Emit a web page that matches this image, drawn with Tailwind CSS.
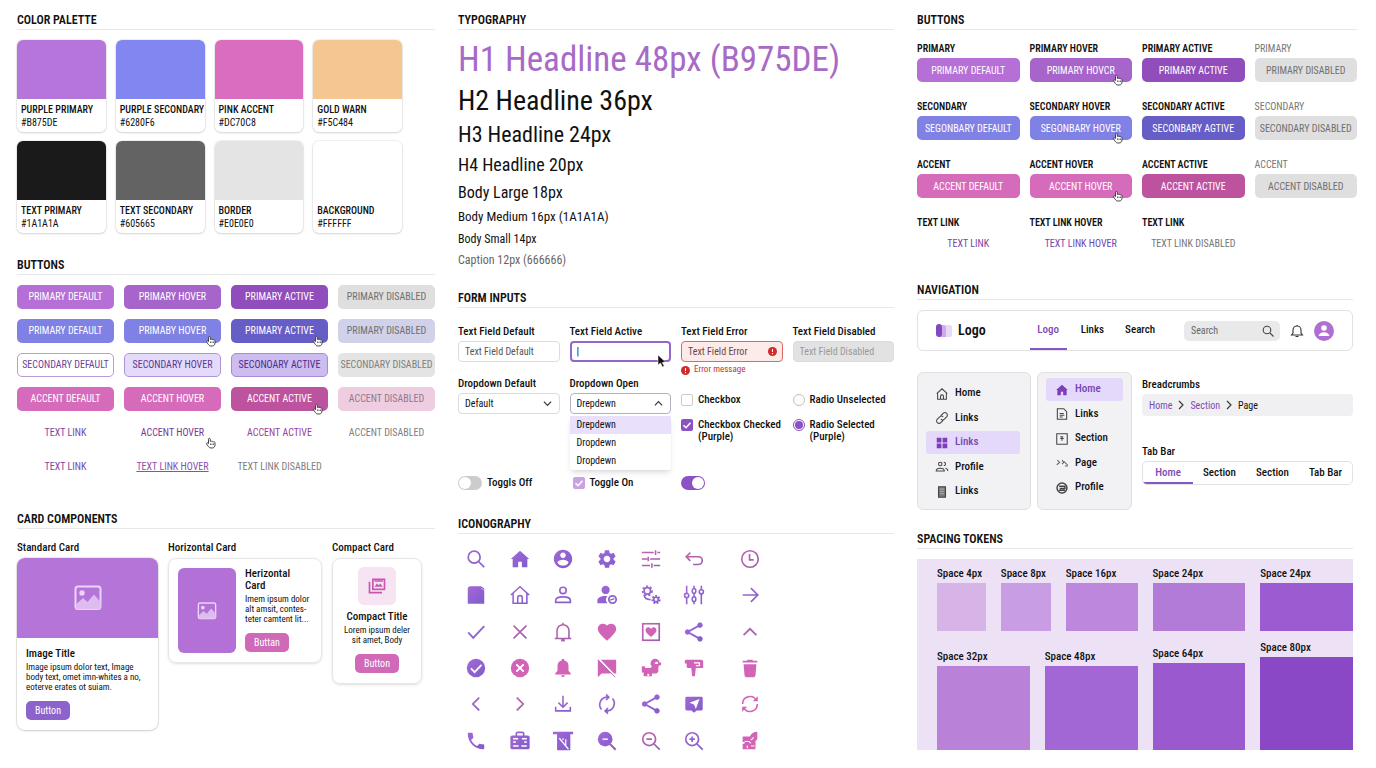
<!DOCTYPE html>
<html lang="en">
<head>
    <meta charset="UTF-8">
    <meta name="viewport" content="width=device-width, initial-scale=1.0">
    <title>Design System</title>
    <script src="https://cdn.jsdelivr.net/npm/@tailwindcss/browser@4"></script>
</head>
<body class="bg-white text-[#111111] font-['Roboto_Condensed',Roboto,'Liberation_Sans',sans-serif]">

    <!-- Shared gradients and symbols -->
    <svg class="absolute size-0" aria-hidden="true">
        <defs>
            <linearGradient id="violet" gradientUnits="userSpaceOnUse" x1="2" y1="2" x2="22" y2="22"><stop offset="0" stop-color="#a468d6"/><stop offset="1" stop-color="#7f5ccb"/></linearGradient>
            <linearGradient id="mix" gradientUnits="userSpaceOnUse" x1="2" y1="2" x2="22" y2="22"><stop offset="0" stop-color="#cb62ae"/><stop offset="1" stop-color="#935fb0"/></linearGradient>
            <linearGradient id="pink" gradientUnits="userSpaceOnUse" x1="2" y1="2" x2="22" y2="22"><stop offset="0" stop-color="#cf62bd"/><stop offset="1" stop-color="#d465b0"/></linearGradient>
        </defs>
        <symbol id="hand" viewBox="0 0 24 24">
            <path d="M7 13V4.500a1.800 1.800 0 0 1 3.600 0V9c.6-1 2.700-1 3.200.3.800-.9 2.700-.6 3.100.6 1.100-.6 3.100-.1 3.100 1.800V16c0 3.500-2 6-6 6h-2c-2.500 0-4-1-5.200-3L3 13.800c-.8-1.400 1-2.900 2.300-1.700z" fill="#fff" stroke="#333" stroke-width="1.800" stroke-linejoin="round"/>
            <path d="M11 13v3M14 13v3M17 13v3" stroke="#333" stroke-width="1.500"/>
        </symbol>
        <symbol id="image" viewBox="0 0 28 26">
            <rect x="1.500" y="1.500" width="25" height="22.500" rx="2.500" fill="none" stroke="#ecd3f7" stroke-width="2"/>
            <circle cx="8" cy="8" r="2.700" fill="#ecd3f7"/>
            <path d="M2 19.500 9 13l4.500 4L20 9.500l6.500 7.500v5.500a1.500 1.500 0 0 1-1.500 1.500H3.500A1.500 1.500 0 0 1 2 22.500z" fill="#dfbcf0"/>
        </symbol>
        <symbol id="house" viewBox="0 0 24 24"><path d="M10 21v-6h4v6h6v-9h2L12 3 2 12h2v9z"/></symbol>
        <symbol id="share" viewBox="0 0 24 24">
            <path d="M18.500 4.500 5 12l13.500 7.500" fill="none" stroke-width="2"/>
            <circle cx="18.500" cy="4.500" r="2.500"/><circle cx="5" cy="12" r="2.500"/><circle cx="18.500" cy="19.500" r="2.500"/>
        </symbol>
        <symbol id="check" viewBox="0 0 12 12"><path d="M2.500 6.200 5 8.700l4.500-5" fill="none" stroke="#fff" stroke-width="1.600"/></symbol>
        <symbol id="alert" viewBox="0 0 12 12"><circle cx="6" cy="6" r="6" fill="#cf2b2b"/><path d="M6 2.500v4M6 8v1.500" stroke="#fff" stroke-width="1.400"/></symbol>
    </svg>

    <main class="grid grid-cols-[418fr_436fr_436fr] gap-[23px] pt-[11px] pl-[17px] pr-[23px]">

        <!-- Left column -->
        <div>
            <section>
                <h2 class="text-[12px] leading-[18px] font-semibold border-b border-[#e8e8ea]">COLOR PALETTE</h2>
                <div class="mt-[10px] mr-[33px] grid grid-cols-4 gap-x-[10px] gap-y-[9px] text-[10px] leading-[13px]">
                    <div class="h-[92px] rounded-md overflow-hidden ring-1 ring-black/5 shadow-sm">
                        <div class="h-[59px] bg-[#b675da]"></div>
                        <div class="px-1 pt-1"><p class="font-medium whitespace-nowrap">PURPLE PRIMARY</p><p>#B875DE</p></div>
                    </div>
                    <div class="h-[92px] rounded-md overflow-hidden ring-1 ring-black/5 shadow-sm">
                        <div class="h-[59px] bg-[#8286f0]"></div>
                        <div class="px-1 pt-1"><p class="font-medium whitespace-nowrap">PURPLE SECONDARY</p><p>#6280F6</p></div>
                    </div>
                    <div class="h-[92px] rounded-md overflow-hidden ring-1 ring-black/5 shadow-sm">
                        <div class="h-[59px] bg-[#da6dc0]"></div>
                        <div class="px-1 pt-1"><p class="font-medium whitespace-nowrap">PINK ACCENT</p><p>#DC70C8</p></div>
                    </div>
                    <div class="h-[92px] rounded-md overflow-hidden ring-1 ring-black/5 shadow-sm">
                        <div class="h-[59px] bg-[#f5c692]"></div>
                        <div class="px-1 pt-1"><p class="font-medium whitespace-nowrap">GOLD WARN</p><p>#F5C484</p></div>
                    </div>
                    <div class="h-[92px] rounded-md overflow-hidden ring-1 ring-black/5 shadow-sm">
                        <div class="h-[59px] bg-[#1a1a1a]"></div>
                        <div class="px-1 pt-1"><p class="font-medium whitespace-nowrap">TEXT PRIMARY</p><p>#1A1A1A</p></div>
                    </div>
                    <div class="h-[92px] rounded-md overflow-hidden ring-1 ring-black/5 shadow-sm">
                        <div class="h-[59px] bg-[#636363]"></div>
                        <div class="px-1 pt-1"><p class="font-medium whitespace-nowrap">TEXT SECONDARY</p><p>#605665</p></div>
                    </div>
                    <div class="h-[92px] rounded-md overflow-hidden ring-1 ring-black/5 shadow-sm">
                        <div class="h-[59px] bg-[#e4e4e4]"></div>
                        <div class="px-1 pt-1"><p class="font-medium whitespace-nowrap">BORDER</p><p>#E0E0E0</p></div>
                    </div>
                    <div class="h-[92px] rounded-md overflow-hidden ring-1 ring-black/5 shadow-sm">
                        <div class="h-[59px]"></div>
                        <div class="px-1 pt-1"><p class="font-medium whitespace-nowrap">BACKGROUND</p><p>#FFFFFF</p></div>
                    </div>
                </div>
            </section>

            <section class="mt-[23px]">
                <h2 class="text-[12px] leading-[18px] font-semibold border-b border-[#e8e8ea]">BUTTONS</h2>
                <div class="mt-[10px] grid grid-cols-4 gap-[10px] text-[10px] leading-[24px] text-center whitespace-nowrap">
                    <button class="h-6 rounded-[5px] bg-[#b56fd6] text-white">PRIMARY DEFAULT</button>
                    <button class="h-6 rounded-[5px] bg-[#a765cb] text-white">PRIMARY HOVER</button>
                    <button class="h-6 rounded-[5px] bg-[#924dbc] text-white">PRIMARY ACTIVE</button>
                    <button disabled class="h-6 rounded-[5px] bg-[#dfdfdf] text-[#707070]">PRIMARY DISABLED</button>

                    <button class="h-6 rounded-[5px] bg-[#8081e5] text-white">PRIMARY DEFAULT</button>
                    <button class="relative h-6 rounded-[5px] bg-[#8081e5] text-white">PRIMABY HOVER
                        <svg class="absolute right-1 -bottom-1 size-3"><use href="#hand"/></svg>
                    </button>
                    <button class="relative h-6 rounded-[5px] bg-[#675dc6] text-white">PRIMARY ACTIVE
                        <svg class="absolute right-1 -bottom-1 size-3"><use href="#hand"/></svg>
                    </button>
                    <button disabled class="h-6 rounded-[5px] bg-[#d1d2ea] text-[#707070]">PRIMARY DISABLED</button>

                    <button class="h-6 rounded-[5px] border border-[#ba9bd9] leading-[22px] text-[#6b3fa0]">SECONDARY DEFAULT</button>
                    <button class="h-6 rounded-[5px] border border-[#ad94dc] bg-[#e4dbfa] leading-[22px] text-[#5b3795]">SECONDARY HOVER</button>
                    <button class="h-6 rounded-[5px] border border-[#a78bd9] bg-[#cdbcf0] leading-[22px] text-[#4b2d8b]">SECONOARY ACTIVE</button>
                    <button disabled class="h-6 rounded-[5px] bg-[#e4e4e4] text-[#808080]">SECONDARY DISABLED</button>

                    <button class="h-6 rounded-[5px] bg-[#d66bbc] text-white">ACCENT DEFAULT</button>
                    <button class="h-6 rounded-[5px] bg-[#d66bbc] text-white">ACCENT HOVER</button>
                    <button class="relative h-6 rounded-[5px] bg-[#bd539f] text-white">ACCENT ACTIVE
                        <svg class="absolute right-1 -bottom-1 size-3"><use href="#hand"/></svg>
                    </button>
                    <button disabled class="h-6 rounded-[5px] bg-[#eecde1] text-[#92798a]">ACCENT DISABLED</button>

                    <a href="#" class="text-[#7a45a5]">TEXT LINK</a>
                    <a href="#" class="relative text-[#7a359a]">ACCENT HOVER
                        <svg class="absolute right-1 -bottom-1 size-3"><use href="#hand"/></svg>
                    </a>
                    <a href="#" class="text-[#9b3c98]">ACCENT ACTIVE</a>
                    <span class="text-[#808080]">ACCENT DISABLED</span>

                    <a href="#" class="text-[#7a45a5]">TEXT LINK</a>
                    <a href="#" class="text-[#8c4fb0] underline">TEXT LINK HOVER</a>
                    <span class="text-[#808080]">TEXT LINK DISABLED</span>
                </div>
            </section>

            <section class="mt-[31px]">
                <h2 class="text-[12px] leading-[18px] font-semibold border-b border-[#e8e8ea]">CARD COMPONENTS</h2>
                <div class="mt-[10px] mr-[13px] grid grid-cols-[141fr_154fr_90fr] gap-[10px] items-start">
                    <div>
                        <h3 class="text-[11px] leading-[18px] font-medium">Standard Card</h3>
                        <article class="mt-px rounded-lg overflow-hidden ring-1 ring-black/8 shadow-sm">
                            <div class="h-20 bg-[#b575d8] flex items-center justify-center">
                                <svg class="w-7 h-[26px]"><use href="#image"/></svg>
                            </div>
                            <div class="px-[9px] pt-2 pb-[9px]">
                                <h4 class="text-[11px] leading-4 font-medium">Image Title</h4>
                                <p class="text-[9px] leading-[10px] whitespace-nowrap">Image ipsum dolor text, Image<br>body text, omet imn-whites a no,<br>eoterve erates ot suiam.</p>
                                <button class="mt-[9px] h-[19px] w-11 rounded-[5px] bg-[#8c62cd] text-white text-[10px]">Button</button>
                            </div>
                        </article>
                    </div>
                    <div>
                        <h3 class="text-[11px] leading-[18px] font-medium">Horizontal Card</h3>
                        <article class="mt-px flex gap-[9px] p-[9px] rounded-lg border border-[#e6e6e6] shadow-sm">
                            <div class="w-[58px] rounded-md bg-[#b371d8] flex items-center justify-center">
                                <svg class="w-5 h-[18px]"><use href="#image"/></svg>
                            </div>
                            <div>
                                <h4 class="text-[11px] leading-3 font-medium">Herizontal<br>Card</h4>
                                <p class="text-[9px] leading-[10px] whitespace-nowrap mt-[2px]">Imem ipsum dolor<br>alt amsit, contes-<br>teter camtent lit...</p>
                                <button class="mt-[9px] h-[19px] w-11 rounded-[5px] bg-[#cf69b8] text-white text-[10px]">Buttan</button>
                            </div>
                        </article>
                    </div>
                    <div>
                        <h3 class="text-[11px] leading-[18px] font-medium">Compact Card</h3>
                        <article class="mt-px pt-2 pb-[10px] flex flex-col items-center text-center rounded-lg border border-[#e6e6e6] shadow-sm">
                            <div class="size-[38px] rounded-md bg-[#f6e4f2] flex items-center justify-center">
                                <svg class="size-5" viewBox="0 0 24 24" fill="none" stroke="#ca55b0" stroke-width="2"><rect x="7" y="4" width="14" height="12"/><path d="M3 7v13h15M9 6h10"/><path d="m9 13 3-4 2 2 2-2 3 4z" fill="#ca55b0" stroke="none"/></svg>
                            </div>
                            <h4 class="mt-1 text-[11px] leading-4 font-medium">Compact Title</h4>
                            <p class="text-[9px] leading-[10px] whitespace-nowrap">Lorem ipsum deler<br>sit amet, Body</p>
                            <button class="mt-[9px] h-[19px] w-11 rounded-[5px] bg-[#cf69b8] text-white text-[10px]">Button</button>
                        </article>
                    </div>
                </div>
            </section>
        </div>

        <!-- Middle column -->
        <div>
            <section class="whitespace-nowrap">
                <h2 class="text-[12px] leading-[18px] font-semibold border-b border-[#e8e8ea]">TYPOGRAPHY</h2>
                <p class="mt-[10px] text-[35px] leading-10 text-[#a76bc6]">H1 Headline 48px (B975DE)</p>
                <p class="mt-[5px] text-[28px] leading-8">H2 Headline 36px</p>
                <p class="mt-[6px] text-[22px] leading-6">H3 Headline 24px</p>
                <p class="mt-[6px] text-[18px] leading-6">H4 Headline 20px</p>
                <p class="mt-[6px] text-[16px] leading-5">Body Large 18px</p>
                <p class="mt-[6px] text-[13px] leading-4">Body Medium 16px (1A1A1A)</p>
                <p class="mt-[6px] text-[12px] leading-4">Body Small 14px</p>
                <p class="mt-[5px] text-[12px] leading-4 text-[#666666]">Caption 12px (666666)</p>
            </section>

            <section class="mt-[21px]">
                <h2 class="text-[12px] leading-[18px] font-semibold border-b border-[#e8e8ea]">FORM INPUTS</h2>
                <form class="mt-[15px] grid grid-cols-4 gap-[10px] text-[11px] font-medium whitespace-nowrap">
                    <div>
                        <label for="field-default" class="block leading-[18px]">Text Field Default</label>
                        <input id="field-default" type="text" value="Text Field Default" class="block w-full h-[21px] px-[6px] rounded border border-[#dcdcdc] text-[10px] font-normal text-[#555555]">
                        <label for="dropdown-default" class="block mt-[13px] leading-[18px]">Dropdown Default</label>
                        <div class="relative">
                            <select id="dropdown-default" class="appearance-none block w-full h-[21px] px-[6px] rounded border border-[#dcdcdc] text-[10px] font-normal"><option>Default</option></select>
                            <svg class="absolute right-2 top-[6px] size-[9px]" viewBox="0 0 10 10" fill="none" stroke="#333" stroke-width="1.300"><path d="m1 3 4 4 4-4"/></svg>
                        </div>
                        <label class="mt-[62px] h-[14px] flex items-center gap-[5px]">
                            <input type="checkbox" role="switch" class="appearance-none w-6 h-[14px] p-px rounded-full bg-[#cccccc] before:block before:size-3 before:rounded-full before:bg-white">
                            Toggls Off
                        </label>
                    </div>
                    <div>
                        <label for="field-active" class="block leading-[18px]">Text Field Active</label>
                        <div class="relative">
                            <input id="field-active" type="text" value="|" class="block w-full h-[21px] px-[5px] rounded border-2 border-[#9466cc] text-[11px] font-normal outline-none">
                            <svg class="absolute right-[5px] top-[14px] w-[9px] h-3" viewBox="0 0 9 12"><path d="M1 0v10l2.500-2 2 4 1.700-1-2-3.500L8.500 7z" fill="#111" stroke="#fff" stroke-width=".5"/></svg>
                        </div>
                        <label for="dropdown-open" class="block mt-[13px] leading-[18px]">Dropdown Open</label>
                        <div class="relative">
                            <select id="dropdown-open" class="appearance-none block w-full h-[21px] px-[6px] rounded border border-[#b5b0c0] text-[10px] font-normal"><option>Drepdewn</option></select>
                            <svg class="absolute right-2 top-[6px] size-[9px]" viewBox="0 0 10 10" fill="none" stroke="#333" stroke-width="1.300"><path d="m1 7 4-4 4 4"/></svg>
                        </div>
                        <ul class="mt-[2px] rounded-[3px] shadow-md text-[10px] font-normal leading-[18px]">
                            <li class="px-[7px] bg-[#e9e0fb]">Drepdewn</li>
                            <li class="px-[7px]">Dropdewn</li>
                            <li class="px-[7px]">Dropdewn</li>
                        </ul>
                        <label class="relative mt-[6px] ml-[3px] h-[14px] flex items-center gap-[5px]">
                            <input type="checkbox" checked class="appearance-none size-3 rounded-xs bg-[#c9a2e6]">
                            <svg class="absolute left-0 top-px size-3"><use href="#check"/></svg>
                            Toggle On
                        </label>
                    </div>
                    <div>
                        <label for="field-error" class="block leading-[18px]">Text Field Error</label>
                        <div class="relative">
                            <input id="field-error" type="text" value="Text Field Error" class="block w-full h-[21px] px-[6px] rounded border border-[#dc6a62] bg-[#fdebe9] text-[10px] font-normal text-[#6b4848]">
                            <svg class="absolute right-[6px] top-[6px] size-[9px]"><use href="#alert"/></svg>
                        </div>
                        <p class="mt-[2px] h-3 flex items-center gap-1 text-[9px] font-normal text-[#c43434]">
                            <svg class="size-[9px]"><use href="#alert"/></svg>Error message
                        </p>
                        <label class="mt-4 h-4 flex items-center gap-[5px]">
                            <input type="checkbox" class="appearance-none size-3 rounded-xs border border-[#cccccc]">
                            Checkbox
                        </label>
                        <label class="relative mt-[11px] flex items-start gap-[5px] leading-3">
                            <input type="checkbox" checked class="appearance-none size-3 rounded-xs bg-[#8b51c5]">
                            <svg class="absolute left-0 top-0 size-3"><use href="#check"/></svg>
                            <span>Checkbox Checked<br>(Purple)</span>
                        </label>
                        <input type="checkbox" role="switch" aria-label="Toggle" checked class="mt-[33px] appearance-none block w-6 h-[14px] p-px rounded-full bg-[#8b51c5] before:block before:ml-auto before:size-3 before:rounded-full before:bg-white">
                    </div>
                    <div>
                        <label for="field-disabled" class="block leading-[18px]">Text Field Disabled</label>
                        <input id="field-disabled" type="text" disabled value="Text Field Disabled" class="block w-full h-[21px] px-[6px] rounded border border-[#dcdcdc] bg-[#e2e2e2] text-[10px] font-normal text-[#999999]">
                        <label class="mt-[30px] h-4 flex items-center gap-[5px]">
                            <input type="radio" name="radio" class="appearance-none size-3 rounded-full border border-[#c0c0c0]">
                            Radio Unselected
                        </label>
                        <label class="mt-[11px] flex items-start gap-[5px] leading-3">
                            <input type="radio" name="radio" checked class="appearance-none size-3 p-px rounded-full border border-[#8b51c5] before:block before:size-2 before:rounded-full before:bg-[#8b51c5]">
                            <span>Radio Selected<br>(Purple)</span>
                        </label>
                    </div>
                </form>
            </section>

            <section class="mt-[25px]">
                <h2 class="text-[12px] leading-[18px] font-semibold border-b border-[#e8e8ea]">ICONOGRAPHY</h2>
                <div class="mt-[7px] -ml-1 w-[329px] h-[218px] grid grid-cols-[repeat(6,17fr)_26fr] grid-rows-6 place-items-center [&_svg]:size-[22px]">
                    <!-- Row 1 -->
                    <svg viewBox="0 0 24 24" fill="none" stroke="url(#violet)" stroke-width="1.900"><circle cx="10" cy="10" r="6.500"/><path d="m15 15 6 6"/></svg>
                    <svg viewBox="0 0 24 24" fill="url(#violet)"><use href="#house"/></svg>
                    <svg viewBox="0 0 24 24" fill="url(#violet)"><path d="M12 2C6.480 2 2 6.480 2 12s4.480 10 10 10 10-4.480 10-10S17.520 2 12 2zm0 3c1.660 0 3 1.340 3 3s-1.340 3-3 3-3-1.340-3-3 1.340-3 3-3zm0 14.200c-2.500 0-4.710-1.280-6-3.220.03-1.990 4-3.080 6-3.080 1.990 0 5.970 1.090 6 3.080-1.290 1.940-3.500 3.220-6 3.220z"/></svg>
                    <svg viewBox="0 0 24 24" fill="url(#violet)"><path d="M19.140 12.940c.04-.3.060-.61.060-.94 0-.32-.02-.64-.07-.94l2.030-1.580c.18-.14.230-.41.120-.61l-1.920-3.320c-.12-.22-.37-.29-.59-.22l-2.390.960c-.5-.38-1.030-.7-1.620-.94l-.36-2.540c-.04-.24-.24-.41-.48-.41h-3.840c-.24 0-.43.170-.47.410l-.36 2.540c-.59.240-1.130.570-1.620.940l-2.390-.96c-.22-.08-.47 0-.59.220L2.740 8.870c-.12.210-.08.470.120.610l2.030 1.580c-.05.3-.09.630-.09.940s.02.640.070.940l-2.030 1.580c-.18.140-.23.410-.12.610l1.920 3.320c.12.220.37.290.59.220l2.390-.96c.5.380 1.030.7 1.620.940l.36 2.540c.05.240.24.410.48.410h3.840c.24 0 .44-.17.470-.41l.36-2.540c.59-.24 1.130-.56 1.620-.94l2.390.960c.22.080.47 0 .59-.22l1.920-3.320c.12-.22.070-.47-.12-.61l-2.010-1.580zM12 15.600c-1.980 0-3.600-1.620-3.600-3.600s1.620-3.600 3.600-3.600 3.600 1.620 3.600 3.600-1.620 3.600-3.600 3.600z"/></svg>
                    <svg viewBox="0 0 24 24" fill="none" stroke="url(#mix)" stroke-width="1.700"><path d="M2 5h13m4 0h3M17 2.500v5M2 12h4m5 0h11M9 9.500v5M6 12h2M2 19h9m4 0h7M13 16.500v5"/></svg>
                    <svg viewBox="0 0 24 24" fill="none" stroke="url(#mix)" stroke-width="1.800"><path d="M8 5 3.500 9.500 8 14M3.500 9.500H17a4 4 0 0 1 4 4v0a4.500 4.500 0 0 1-4.500 4.500H11"/></svg>
                    <svg viewBox="0 0 24 24" fill="none" stroke="url(#mix)" stroke-width="1.800"><circle cx="12" cy="12" r="9"/><path d="M11.500 6.500V13H16"/></svg>
                    <!-- Row 2 -->
                    <svg viewBox="0 0 24 24" fill="url(#violet)"><path d="M6 2.500h11.500L21 5v16.500H3V5.500a3 3 0 0 1 3-3z"/><path d="M17.500 4.500 21 7" fill="none" stroke="#fff" stroke-opacity=".5"/></svg>
                    <svg viewBox="0 0 24 24" fill="none" stroke="url(#violet)" stroke-width="1.700"><path d="M2 12 12 3l10 9M4.500 10v11h15V10M9.500 21v-6a2.500 2.500 0 0 1 5 0v6"/></svg>
                    <svg viewBox="0 0 24 24" fill="none" stroke="url(#violet)" stroke-width="1.800"><circle cx="12" cy="7" r="3.500"/><path d="M4 20v-2c0-2.500 3-4 8-4s8 1.500 8 4v2z"/></svg>
                    <svg viewBox="0 0 24 24" fill="url(#violet)"><circle cx="10.500" cy="6.500" r="4.500"/><path d="M1.500 21v-3c0-3 3.500-5 9-5h2a6 6 0 0 0 0 8z"/><circle cx="18" cy="17" r="4" fill="none" stroke="url(#violet)" stroke-width="1.900"/><path d="M15.500 17.500 20 16" stroke="url(#violet)" stroke-width="1.500"/></svg>
                    <svg viewBox="0 0 24 24" fill="none" stroke="url(#violet)"><circle cx="8" cy="7.500" r="3.500" stroke-width="1.800"/><circle cx="8" cy="7.500" r="5" stroke-width="2" stroke-dasharray="2.300 2"/><circle cx="17.500" cy="17" r="2.500" stroke-width="1.800"/><circle cx="17.500" cy="17" r="4" stroke-width="2" stroke-dasharray="2 1.500"/><path d="M4.500 11.500c0 4 3 5.500 7 5.500" stroke-width="1.800"/></svg>
                    <svg viewBox="0 0 24 24" fill="none" stroke="url(#violet)" stroke-width="1.700"><path d="M4 2v8m0 5v7M12 2v3m0 5v4m0 5v3M20 2v4m0 5v11"/><circle cx="4" cy="12.500" r="2.300"/><ellipse cx="12" cy="7.500" rx="2" ry="2.500"/><ellipse cx="12" cy="16.500" rx="2" ry="2.500"/><circle cx="20" cy="8.500" r="2.300"/></svg>
                    <svg viewBox="0 0 24 24" fill="none" stroke="url(#violet)" stroke-width="1.800"><path d="M4 12h16M13 4.500l7.500 7.500-7.500 7.500"/></svg>
                    <!-- Row 3 -->
                    <svg viewBox="0 0 24 24" fill="none" stroke="url(#violet)" stroke-width="2"><path d="m3.500 12.500 5.500 6L21 5.500"/></svg>
                    <svg viewBox="0 0 24 24" fill="none" stroke="url(#mix)" stroke-width="1.800"><path d="m5 5 14 14M19 5 5 19"/></svg>
                    <svg viewBox="0 0 24 24" fill="none" stroke="url(#mix)" stroke-width="1.700"><path d="M3 19h18M5.500 19v-8.500a6.500 6.500 0 0 1 13 0V19M12 4V2"/><path d="M10 21h4" stroke-width="2.500"/></svg>
                    <svg viewBox="0 0 24 24" fill="url(#pink)"><path d="m12 21.500-1.500-1.300C5.400 15.400 2 12.300 2 8.500 2 5.400 4.400 3 7.500 3c1.700 0 3.400.8 4.500 2.100C13.100 3.800 14.800 3 16.500 3 19.600 3 22 5.400 22 8.500c0 3.800-3.400 6.900-8.500 11.700z"/></svg>
                    <svg viewBox="0 0 24 24" fill="url(#pink)"><rect x="3" y="3" width="18" height="18" fill="none" stroke="url(#mix)" stroke-width="1.800"/><path d="m12 17.500-1-.9C8 13.900 6 12.200 6 10a3.100 3.100 0 0 1 6-1.200A3.100 3.100 0 0 1 18 10c0 2.200-2 3.900-5 6.600z"/></svg>
                    <svg viewBox="0 0 24 24" fill="url(#violet)" stroke="url(#violet)"><use href="#share"/></svg>
                    <svg viewBox="0 0 24 24" fill="none" stroke="url(#mix)" stroke-width="1.900"><path d="m5 15.500 7-7 7 7"/></svg>
                    <!-- Row 4 -->
                    <svg viewBox="0 0 24 24"><circle cx="12" cy="12" r="10" fill="url(#violet)"/><path d="m6.500 12.500 4 4L18 8.500" fill="none" stroke="#fff" stroke-width="2"/></svg>
                    <svg viewBox="0 0 24 24"><circle cx="12" cy="12" r="10" fill="url(#pink)"/><path d="m8 8 8 8M16 8l-8 8" fill="none" stroke="#fff" stroke-width="2"/></svg>
                    <svg viewBox="0 0 24 24" fill="url(#pink)"><path d="M12 2a1.500 1.500 0 0 1 1.500 1.700A6 6 0 0 1 18 9.500V15l2.500 3v1h-17v-1L6 15V9.500a6 6 0 0 1 4.500-5.800A1.500 1.500 0 0 1 12 2zM10 20h4a2 2 0 0 1-4 0z"/></svg>
                    <svg viewBox="0 0 24 24"><path d="M2 3h20v15H6l-4 4z" fill="url(#pink)"/><path d="M3 2 21 21" stroke="#fff" stroke-width="2"/><path d="m2 3 19 19" stroke="#b35fae" stroke-width="1"/></svg>
                    <svg viewBox="0 0 24 24" fill="url(#pink)"><circle cx="16.500" cy="7" r="5"/><path d="M2 10h3l1 2h5l3-2h6v6l-2 2h-5v3H4v-4H2z"/><circle cx="9" cy="18.500" r="2.500"/><path d="M16 7.500h4a2 2 0 0 0-3-2z" fill="#fff"/><circle cx="9" cy="19.500" r="1.200" fill="#fff"/><path d="M20 6h3v3h-3z"/></svg>
                    <svg viewBox="0 0 24 24" fill="url(#pink)"><path d="M3 3h17a2 2 0 0 1 2 2v7h-8l-1 9h-3l-1-9H5a2 2 0 0 1-1-2V7H2V4z"/><path d="M12 6.500h6v3h-4" fill="none" stroke="#fff" stroke-width="1.300"/></svg>
                    <svg viewBox="0 0 24 24" fill="url(#pink)"><path d="M5 8h14l-1 12a2 2 0 0 1-2 2H8a2 2 0 0 1-2-2zM4 4h5V3h6v1h5v2H4z"/></svg>
                    <!-- Row 5 -->
                    <svg viewBox="0 0 24 24" fill="none" stroke="url(#violet)" stroke-width="1.900"><path d="m15.500 5-7 7 7 7"/></svg>
                    <svg viewBox="0 0 24 24" fill="none" stroke="url(#mix)" stroke-width="1.900"><path d="m8.500 5 7 7-7 7"/></svg>
                    <svg viewBox="0 0 24 24" fill="none" stroke="url(#violet)" stroke-width="1.700"><path d="M12 3v12M7 10.500l5 5 5-5M4 15v4.500h16V15"/></svg>
                    <svg viewBox="0 0 24 24" fill="none" stroke="url(#violet)" stroke-width="1.800"><path d="M6 18a8.300 8.300 0 0 1 5-13.500h2.500M11 1.500l3 3-3 3M18 6a8.300 8.300 0 0 1-5 13.500h-2.500M13 16.500l-3 3 3 3"/></svg>
                    <svg viewBox="0 0 24 24" fill="url(#violet)" stroke="url(#violet)"><use href="#share"/></svg>
                    <svg viewBox="0 0 24 24"><path d="M4 4h16a1.500 1.500 0 0 1 1.500 1.500v12A1.500 1.500 0 0 1 20 19h-5l-3 2.500L9 19H4a1.500 1.500 0 0 1-1.500-1.500v-12A1.500 1.500 0 0 1 4 4z" fill="url(#violet)"/><path d="m7 10.500 11-4-4 11-2-5z" fill="#fff"/></svg>
                    <svg viewBox="0 0 24 24" fill="none" stroke="url(#pink)" stroke-width="1.700"><path d="M4 12a8 8 0 0 1 15-4M20 12a8 8 0 0 1-15 4"/><path d="M20.500 3.500V9H15zM3.500 20.500V15H9z" fill="url(#pink)" stroke="none"/></svg>
                    <!-- Row 6 -->
                    <svg viewBox="0 0 24 24" fill="url(#violet)"><path d="M6.600 10.800c1.400 2.800 3.800 5.100 6.600 6.600l2.200-2.200c.3-.3.700-.4 1-.2 1.100.4 2.300.6 3.600.6.600 0 1 .4 1 1V20c0 .6-.4 1-1 1C10.600 21 3 13.400 3 4c0-.6.4-1 1-1h3.500c.6 0 1 .4 1 1 0 1.300.2 2.500.6 3.600.1.400 0 .8-.2 1z"/></svg>
                    <svg viewBox="0 0 24 24" fill="url(#violet)"><path d="M8 6.500V4a1.500 1.500 0 0 1 1.500-1.500h5A1.500 1.500 0 0 1 16 4v2.500" fill="none" stroke="url(#violet)" stroke-width="1.900"/><rect x="1.500" y="6" width="21" height="15" rx="2"/><path d="M4.500 9.500H10m4 0h5.500M4.500 13h3m9 0h3M4.500 17.500h6m3 0h6" stroke="#fff" stroke-width="1.700"/></svg>
                    <svg viewBox="0 0 24 24" fill="url(#violet)"><path d="M1 2h22v2.500h-3V22H5.500V4.500H1z"/><path d="m8 9 10 12M12 11V9M15 10v7" stroke="#fff" stroke-width="1.300"/></svg>
                    <svg viewBox="0 0 24 24"><circle cx="10" cy="10" r="8" fill="url(#violet)"/><path d="m15.500 15.500 6 6" stroke="url(#mix)" stroke-width="2.300"/><path d="M7 10h6" stroke="#fff" stroke-width="1.500"/></svg>
                    <svg viewBox="0 0 24 24" fill="none" stroke="url(#mix)" stroke-width="1.900"><circle cx="10" cy="10" r="7"/><path d="m15 15 6.500 6.500M7 10h6"/></svg>
                    <svg viewBox="0 0 24 24" fill="none" stroke="url(#violet)" stroke-width="1.900"><circle cx="10" cy="10" r="7"/><path d="m15 15 6.500 6.500M7 10h6M10 7v6"/></svg>
                    <svg viewBox="0 0 24 24" fill="url(#pink)"><path d="M20 2v8l-2 2v9H4v-6h2v-2H4V7h8c1-3 4-5 8-5z"/><path d="M6 12.500h5l2 2M9 20v-3M13 11l3-3M13 17.500h4" fill="none" stroke="#fff" stroke-width="1.200"/></svg>
                </div>
            </section>
        </div>

        <!-- Right column -->
        <div>
            <section class="-mr-1">
                <h2 class="text-[12px] leading-[18px] font-semibold border-b border-[#e8e8ea]">BUTTONS</h2>
                <div class="mt-[10px] grid grid-cols-4 gap-x-[10px] gap-y-4 text-[10px] whitespace-nowrap">
                    <div><h3 class="leading-[18px] font-semibold">PRIMARY</h3><button class="w-full h-6 rounded-[5px] bg-[#b56fd6] text-white">PRIMARY DEFAULT</button></div>
                    <div class="relative"><h3 class="leading-[18px] font-semibold">PRIMARY HOVER</h3><button class="w-full h-6 rounded-[5px] bg-[#a765cb] text-white">PRIMARY HOVCR</button><svg class="absolute right-2 -bottom-1 size-3"><use href="#hand"/></svg></div>
                    <div><h3 class="leading-[18px] font-semibold">PRIMARY ACTIVE</h3><button class="w-full h-6 rounded-[5px] bg-[#924dbc] text-white">PRIMARY ACTIVE</button></div>
                    <div><h3 class="leading-[18px] text-[#777777]">PRIMARY</h3><button disabled class="w-full h-6 rounded-[5px] bg-[#dfdfdf] text-[#707070]">PRIMARY DISABLED</button></div>

                    <div><h3 class="leading-[18px] font-semibold">SECONDARY</h3><button class="w-full h-6 rounded-[5px] bg-[#8081e5] text-white">SEGONBARY DEFAULT</button></div>
                    <div class="relative"><h3 class="leading-[18px] font-semibold">SECONDARY HOVER</h3><button class="w-full h-6 rounded-[5px] bg-[#8081e5] text-white">SEGONBARY HOVER</button><svg class="absolute right-2 -bottom-1 size-3"><use href="#hand"/></svg></div>
                    <div><h3 class="leading-[18px] font-semibold">SECONDARY ACTIVE</h3><button class="w-full h-6 rounded-[5px] bg-[#675dc6] text-white">SECONBARY AGTIVE</button></div>
                    <div><h3 class="leading-[18px] text-[#777777]">SECONDARY</h3><button disabled class="w-full h-6 rounded-[5px] bg-[#dfdfdf] text-[#707070]">SECONDARY DISABLED</button></div>

                    <div><h3 class="leading-[18px] font-semibold">ACCENT</h3><button class="w-full h-6 rounded-[5px] bg-[#d66bbc] text-white">ACCENT DEFAULT</button></div>
                    <div class="relative"><h3 class="leading-[18px] font-semibold">ACCENT HOVER</h3><button class="w-full h-6 rounded-[5px] bg-[#d66bbc] text-white">ACCENT HOVER</button><svg class="absolute right-2 -bottom-1 size-3"><use href="#hand"/></svg></div>
                    <div><h3 class="leading-[18px] font-semibold">ACCENT ACTIVE</h3><button class="w-full h-6 rounded-[5px] bg-[#bd539f] text-white">ACCENT ACTIVE</button></div>
                    <div><h3 class="leading-[18px] text-[#777777]">ACCENT</h3><button disabled class="w-full h-6 rounded-[5px] bg-[#dfdfdf] text-[#707070]">ACCENT DISABLED</button></div>

                    <div><h3 class="leading-[18px] font-semibold">TEXT LINK</h3><a href="#" class="block leading-6 text-center text-[#7a45a5]">TEXT LINK</a></div>
                    <div><h3 class="leading-[18px] font-semibold">TEXT LINK HOVER</h3><a href="#" class="block leading-6 text-center text-[#6f45b0]">TEXT LINK HOVER</a></div>
                    <div><h3 class="leading-[18px] font-semibold">TEXT LINK</h3><span class="block leading-6 text-center text-[#777777]">TEXT LINK DISABLED</span></div>
                </div>
            </section>

            <section class="mt-[25px]">
                <h2 class="text-[12px] leading-[18px] font-semibold border-b border-[#e8e8ea]">NAVIGATION</h2>
                <header class="mt-[10px] h-[41px] pl-[17px] pr-[18px] flex items-center rounded-md border border-[#e2e2e2] text-[11px] font-medium">
                    <svg class="w-[18px] h-4" viewBox="0 0 18 16"><rect x="6" y="2" width="11" height="12" rx="2" fill="#e9d9f6"/><path d="M5 2h3a3 3 0 0 1 3 3v9H5z" fill="#cfa9ea"/><rect x="1" y="1" width="6" height="13" rx="3" fill="#8248bd"/></svg>
                    <span class="ml-[5px] text-[14px] font-semibold">Logo</span>
                    <nav class="ml-[44px] self-stretch flex items-center">
                        <a href="#" class="w-[37px] self-stretch flex items-center justify-center border-b-2 border-[#8a55c8] pt-[2px] text-[#7b4bb5]">Logo</a>
                        <a href="#" class="ml-[14px]">Links</a>
                        <a href="#" class="ml-[21px]">Search</a>
                    </nav>
                    <div class="relative ml-auto">
                        <input type="search" aria-label="Search" placeholder="Search" class="block w-24 h-5 px-[7px] rounded-[5px] bg-[#e9e9e9] text-[10px] font-normal placeholder:text-[#666666]">
                        <svg class="absolute right-[6px] top-[4px] size-3" viewBox="0 0 12 12" fill="none" stroke="#444" stroke-width="1.100"><circle cx="5" cy="5" r="3.800"/><path d="m8 8 3.500 3.500"/></svg>
                    </div>
                    <svg class="ml-[10px] size-[14px]" viewBox="0 0 14 14" fill="none" stroke="#333" stroke-width="1.100"><path d="M1.500 11h11L11 9V6a4 4 0 0 0-8 0v3zM7 2V1M5.500 12.500h3"/></svg>
                    <svg class="ml-[10px] size-5" viewBox="0 0 20 20"><circle cx="10" cy="10" r="10" fill="#b06fd2"/><circle cx="10" cy="7" r="2.800" fill="#fff"/><path d="M4.500 15c.5-2.500 2.500-3.800 5.500-3.800s5 1.300 5.500 3.800z" fill="#fff"/></svg>
                </header>

                <div class="mt-[21px] flex text-[11px] font-medium">
                    <aside class="w-[114px] h-[138px] pl-2 pr-[10px] pt-[9px] pb-[6px] flex flex-col justify-between rounded-md border border-[#e0e0e3] bg-[#f2f1f4]">
                        <a href="#" class="h-[23px] px-[9px] flex items-center gap-[6px]"><svg class="size-[14px]" viewBox="0 0 24 24" fill="none" stroke="#444" stroke-width="1.800"><path d="M3 11.500 12 3l9 8.500M4.500 10v11h15V10M9.500 21v-5a2.500 2.500 0 0 1 5 0v5"/></svg>Home</a>
                        <a href="#" class="h-[23px] px-[9px] flex items-center gap-[6px]"><svg class="size-[14px]" viewBox="0 0 24 24" fill="none" stroke="#444" stroke-width="1.800"><path d="m10 8 4-4a4 4 0 0 1 6 6l-4 4a4 4 0 0 1-6 0M14 16l-4 4a4 4 0 0 1-6-6l4-4a4 4 0 0 1 6 0"/></svg>Links</a>
                        <a href="#" class="h-[23px] px-[9px] flex items-center gap-[6px] rounded-[3px] bg-[#e4d9fa] text-[#7544b5]"><svg class="size-[14px]" viewBox="0 0 24 24" fill="#7c3fb8"><path d="M3 3h8v8H3zM13 3h8v8h-8zM3 13h8v8H3zM13 13h8v8h-8z"/></svg>Links</a>
                        <a href="#" class="h-[23px] px-[9px] flex items-center gap-[6px]"><svg class="size-[14px]" viewBox="0 0 24 24" fill="none" stroke="#444" stroke-width="1.800"><circle cx="9" cy="7" r="3"/><path d="M15 4a3 3 0 0 1 0 6M2 19c0-3 2.500-5 7-5s7 2 7 5zM18 14c2.500.5 4 2.500 4 5"/></svg>Profile</a>
                        <a href="#" class="h-[23px] px-[9px] flex items-center gap-[6px]"><svg class="size-[14px]" viewBox="0 0 24 24" fill="#777" stroke="#444" stroke-width="1.800"><path d="M6 3h12v18H6z"/><path d="M8 7h8M9 11h6M9 15h6" stroke="#ccc" stroke-width="1.200"/></svg>Links</a>
                    </aside>
                    <aside class="ml-[6px] w-[95px] h-[138px] px-2 pt-[5px] pb-[10px] flex flex-col justify-between rounded-md border border-[#e0e0e3] bg-[#f2f1f4]">
                        <a href="#" class="h-[23px] px-[9px] flex items-center gap-[6px] rounded-[3px] bg-[#e4d9fa] text-[#7544b5]"><svg class="size-[14px]" fill="#7c3fb8"><use href="#house"/></svg>Home</a>
                        <a href="#" class="h-[23px] px-[9px] flex items-center gap-[6px]"><svg class="size-[14px]" viewBox="0 0 24 24" fill="none" stroke="#444" stroke-width="1.800"><path d="M4 3h11l5 5v13H4zM8 11h7M8 14h8M8 17h5"/></svg>Links</a>
                        <a href="#" class="h-[23px] px-[9px] flex items-center gap-[6px]"><svg class="size-[14px]" viewBox="0 0 24 24" fill="none" stroke="#444" stroke-width="1.800"><path d="M3 3h18v18H3zM9 8h5M9 11h6M12 8v7"/></svg>Section</a>
                        <a href="#" class="h-[23px] px-[9px] flex items-center gap-[6px]"><svg class="size-[14px]" viewBox="0 0 24 24" fill="none" stroke="#666" stroke-width="1.800"><path d="m4 7 4 4-5 4M12 7l3 4-3 3M15 9l6 6v2h-4"/></svg>Page</a>
                        <a href="#" class="h-[23px] px-[9px] flex items-center gap-[6px]"><svg class="size-[14px]" viewBox="0 0 24 24" fill="none" stroke="#444" stroke-width="2.500"><circle cx="12" cy="12" r="8.500"/><path d="M7 9h10v4H8M7 16h10"/></svg>Profile</a>
                    </aside>
                    <div class="ml-[10px] flex-1 pt-1">
                        <h3 class="leading-[18px]">Breadcrumbs</h3>
                        <nav class="h-[22px] px-[7px] flex items-center gap-[6px] rounded bg-[#f0eff2] text-[10px] font-normal">
                            <a href="#" class="text-[#7b4bb5]">Home</a>
                            <svg class="size-[6px] overflow-visible" viewBox="0 0 6 6" fill="none" stroke="#333" stroke-width="1.100"><path d="m1-1 4 4-4 4"/></svg>
                            <a href="#" class="text-[#7b4bb5]">Section</a>
                            <svg class="size-[6px] overflow-visible" viewBox="0 0 6 6" fill="none" stroke="#333" stroke-width="1.100"><path d="m1-1 4 4-4 4"/></svg>
                            <span>Page</span>
                        </nav>
                        <h3 class="mt-[27px] leading-[18px]">Tab Bar</h3>
                        <nav class="h-6 flex items-stretch rounded-[5px] border border-[#e2e2e2] overflow-hidden">
                            <a href="#" class="w-[50px] flex items-center justify-center border-b-2 border-[#8a55c8] pt-[2px] text-[#7b4bb5]">Home</a>
                            <a href="#" class="flex-1 flex items-center justify-center">Section</a>
                            <a href="#" class="flex-1 flex items-center justify-center">Section</a>
                            <a href="#" class="flex-1 flex items-center justify-center">Tab Bar</a>
                        </nav>
                    </div>
                </div>
            </section>

            <section class="mt-5">
                <h2 class="text-[12px] leading-[18px] font-semibold border-b border-[#e8e8ea]">SPACING TOKENS</h2>
                <div class="mt-[10px] pl-5 pt-[6px] bg-[#ece1f5] text-[11px] leading-[18px] font-medium whitespace-nowrap">
                    <div class="grid grid-cols-[49fr_50fr_72fr_93fr_93fr] gap-[15px]">
                        <div>Space 4px<div class="h-12 bg-[#d6b4e8]"></div></div>
                        <div>Space 8px<div class="h-12 bg-[#c89de3]"></div></div>
                        <div>Space 16px<div class="h-12 bg-[#bc87dc]"></div></div>
                        <div>Space 24px<div class="h-12 bg-[#b27bd8]"></div></div>
                        <div>Space 24px<div class="h-12 bg-[#9c5cd1]"></div></div>
                    </div>
                    <div class="mt-2 grid grid-cols-4 gap-[15px] items-end">
                        <div>Space 32px<div class="h-[84px] bg-[#b982d8]"></div></div>
                        <div>Space 48px<div class="h-[84px] bg-[#a267d4]"></div></div>
                        <div>Space 64px<div class="h-[87px] bg-[#9a59cf]"></div></div>
                        <div>Space 80px<div class="h-[93px] bg-[#8b48c6]"></div></div>
                    </div>
                </div>
            </section>
        </div>
    </main>
</body>
</html>
